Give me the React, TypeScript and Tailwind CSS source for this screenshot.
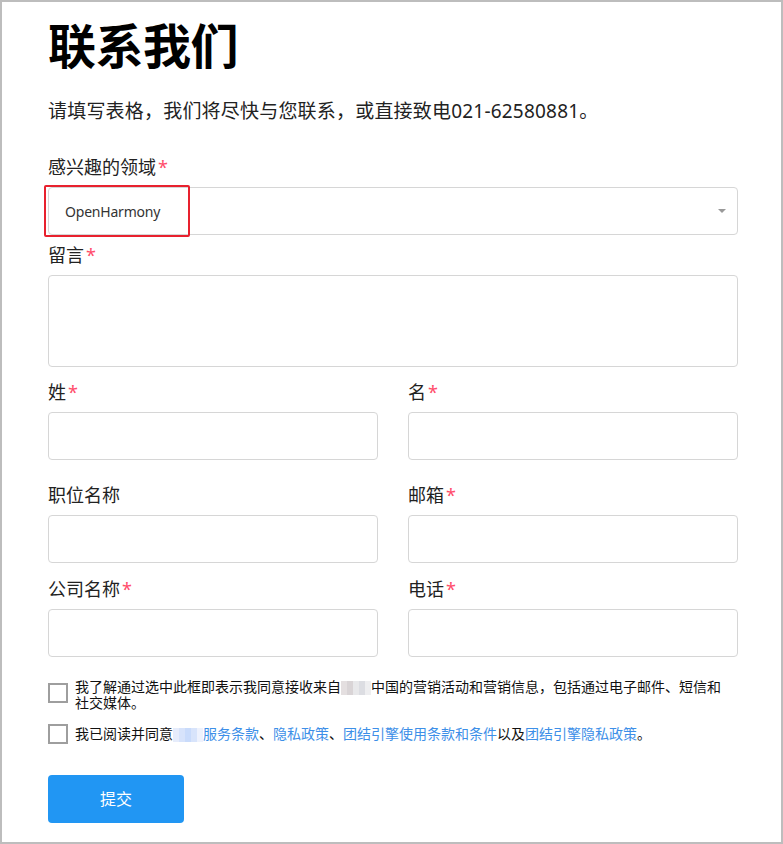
import { useState } from 'react';

const font = { fontFamily: '"Noto Sans", "Noto Sans CJK SC", sans-serif' };

const Label = ({ text, required }: { text: string; required?: boolean }) => (
  <label className="block text-[18px] leading-[24px] text-[#222] mb-[8px]">
    {text}
    {required && <span className="text-[#ff4d6a] ml-[2px]">*</span>}
  </label>
);

const Input = () => (
  <input className="block w-full h-[48px] rounded-[4px] border border-[#d6d6d6] bg-white px-4 text-[14px] outline-none" />
);

// pixel mosaic standing in for the blurred brand name
const Mosaic = ({ colors }: { colors: string[] }) => (
  <span className="inline-flex align-middle h-[14px]">
    {colors.map((c, i) => (
      <span key={i} className="inline-block w-[6px] h-[14px]" style={{ background: c }} />
    ))}
  </span>
);

const Checkbox = ({ children, center }: { children: React.ReactNode; center?: boolean }) => {
  const [checked, setChecked] = useState(false);
  return (
    <label className={`flex gap-[7px] cursor-pointer ${center ? 'items-center' : 'items-start'}`}>
      <span
        onClick={() => setChecked(!checked)}
        className={`shrink-0 w-[20px] h-[20px] border-2 ${center ? '' : 'mt-[4px]'} ${checked ? 'border-[#2196f3] bg-[#2196f3]' : 'border-[#9e9e9e] bg-white'}`}
      />
      <span className="max-w-[655px] text-[14px] leading-[15px] text-[#111]">{children}</span>
    </label>
  );
};

export default function App() {
  return (
    <div style={font} className="w-[783px] h-[844px] border-2 border-[#bdbdbd] bg-white overflow-hidden">
      <div className="pl-[46px] pr-[43px] pt-[18px]">
        <h1 className="text-[48px] leading-[52px] font-bold text-black tracking-[-0.5px]">联系我们</h1>
        <p className="mt-[27px] text-[19px] leading-[24px] text-[#222] tracking-[0.2px]">
          请填写表格，我们将尽快与您联系，或直接致电021-62580881。
        </p>

        <div className="mt-[32px]">
          <Label text="感兴趣的领域" required />
          <div className="relative h-[48px] rounded-[4px] border border-[#d6d6d6] flex items-center pl-[16px]">
            <span className="text-[14px] text-[#333] tracking-[-0.2px]">OpenHarmony</span>
            <span className="absolute right-[11px] top-[21px] w-0 h-0 border-l-[4px] border-r-[4px] border-t-[4px] border-l-transparent border-r-transparent border-t-[#999]" />
            <span className="absolute -left-[5px] -top-[3px] w-[146px] h-[52px] border-2 border-[#e8212e] rounded-[2px]" />
          </div>
        </div>

        <div className="mt-[8px]">
          <Label text="留言" required />
          <textarea className="block w-full h-[92px] rounded-[4px] border border-[#d6d6d6] resize-none outline-none" />
        </div>

        <div className="grid grid-cols-2 gap-x-[30px] mt-[13px]">
          <div>
            <Label text="姓" required />
            <Input />
          </div>
          <div>
            <Label text="名" required />
            <Input />
          </div>
          <div className="mt-[23px]">
            <Label text="职位名称" />
            <Input />
          </div>
          <div className="mt-[23px]">
            <Label text="邮箱" required />
            <Input />
          </div>
          <div className="mt-[14px]">
            <Label text="公司名称" required />
            <Input />
          </div>
          <div className="mt-[14px]">
            <Label text="电话" required />
            <Input />
          </div>
        </div>

        <div className="mt-[22px] flex flex-col gap-[14px]">
          <Checkbox>
            我了解通过选中此框即表示我同意接收来自
            <Mosaic colors={['#e4dfe0', '#d9d4d6', '#e8e8ea', '#dcdde2', '#eeeef0']} />
            中国的营销活动和营销信息，包括通过电子邮件、短信和社交媒体。
          </Checkbox>
          <Checkbox center>
            我已阅读并同意
            <Mosaic colors={['#e6ecfb', '#d7e3fb', '#c9dbfb', '#d8e4fb', '#eef2fd']} />
            <a className="text-[#3d8fe8]">服务条款</a>、<a className="text-[#3d8fe8]">隐私政策</a>、
            <a className="text-[#3d8fe8]">团结引擎使用条款和条件</a>以及<a className="text-[#3d8fe8]">团结引擎隐私政策</a>。
          </Checkbox>
        </div>

        <button className="mt-[31px] w-[136px] h-[48px] rounded-[4px] bg-[#2196f3] text-white text-[16px]">
          提交
        </button>
      </div>
    </div>
  );
}
